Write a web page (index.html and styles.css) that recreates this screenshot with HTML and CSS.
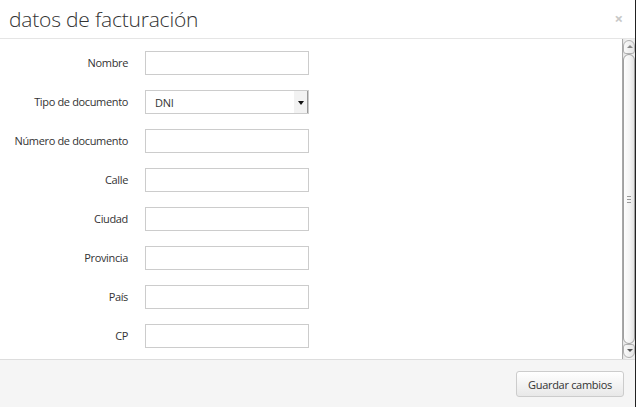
FILE: index.html
```
<!DOCTYPE html>
<html lang="es">
    <head>
        <meta charset="UTF-8">
        <title>datos de facturación</title>
        <link rel="stylesheet" href="styles.css">
    </head>
    <body>
        <div class="modal">

            <div class="modal-header">
                <h3>datos de facturación</h3>
                <span class="close">×</span>
            </div>

            <div class="modal-body">
                <form class="form-area">
                    <label for="nombre">Nombre</label>
                    <input type="text" id="nombre">

                    <label for="tipo">Tipo de documento</label>
                    <div class="select-box" id="tipo">
                        <span>DNI</span>
                        <span class="select-arrow"></span>
                    </div>

                    <label for="numero">Número de documento</label>
                    <input type="text" id="numero">

                    <label for="calle">Calle</label>
                    <input type="text" id="calle">

                    <label for="ciudad">Ciudad</label>
                    <input type="text" id="ciudad">

                    <label for="provincia">Provincia</label>
                    <input type="text" id="provincia">

                    <label for="pais">País</label>
                    <input type="text" id="pais">

                    <label for="cp">CP</label>
                    <input type="text" id="cp">
                </form>

                <!-- barra de desplazamiento -->
                <div class="scrollbar">
                    <div class="sb-btn sb-up"></div>
                    <div class="sb-thumb"><span class="grip"></span></div>
                    <div class="sb-btn sb-down"></div>
                </div>
            </div>

            <div class="modal-footer">
                <button type="button">Guardar cambios</button>
            </div>

        </div>
    </body>
</html>
```

FILE: styles.css
```
body {
    margin: 0;
    font-family: "Open Sans", Arial, sans-serif;
    color: #333;
    background: #fff;
}
.modal {
    width: 635px;
    height: 407px;
    border-right: 1px solid #222;
    display: flex;
    flex-direction: column;
}
.modal-header {
    height: 38px;
    border-bottom: 1px solid #e5e5e5;
    display: flex;
    align-items: center;
    justify-content: space-between;
    padding: 0 12px 0 9px;
}
.modal-header h3 {
    margin: 0;
    font-size: 21px;
    font-weight: 300;
    letter-spacing: -0.2px;
    color: #333;
    line-height: 38px;
}
.close {
    color: #c8c8c8;
    font-size: 15px;
    font-weight: bold;
    margin-top: -3px;
}
.modal-body {
    flex: 1;
    display: flex;
    min-height: 0;
}
.form-area {
    flex: 1;
    display: grid;
    grid-template-columns: 128px 164px;
    grid-auto-rows: 24px;
    column-gap: 17px;
    row-gap: 15px;
    align-items: center;
    padding-top: 12px;
    margin: 0;
    overflow: hidden;
}
.form-area label {
    text-align: right;
    font-size: 11px;
    letter-spacing: -0.35px;
    white-space: nowrap;
    color: #333;
    margin-top: -2px;
}
.form-area input {
    box-sizing: border-box;
    width: 164px;
    height: 24px;
    border: 1px solid #ccc;
    margin: 0;
    padding: 3px 6px;
}
.select-box {
    box-sizing: border-box;
    width: 164px;
    height: 24px;
    border: 1px solid #ccc;
    display: flex;
    align-items: center;
    justify-content: space-between;
    font-size: 11px;
    letter-spacing: -0.3px;
    padding-left: 9px;
}
.select-arrow {
    width: 13px;
    height: 22px;
    background: #f2f2f2;
    border-right: 1px solid #999;
    position: relative;
}
.select-arrow::after {
    content: "";
    position: absolute;
    left: 4px;
    top: 10px;
    border-left: 3px solid transparent;
    border-right: 3px solid transparent;
    border-top: 4px solid #111;
}
.scrollbar {
    width: 12px;
    border-left: 1px solid #a8a8a8;
    background: linear-gradient(to right, #e4e4e4, #f6f6f6 40%, #eaeaea);
    display: flex;
    flex-direction: column;
    padding: 1px 0;
}
.sb-btn {
    height: 12px;
    border: 1px solid #b0b0b0;
    border-radius: 6px 6px 3px 3px;
    background: linear-gradient(to right, #fafafa, #e6e6e6);
    position: relative;
}
.sb-down {
    border-radius: 3px 3px 6px 6px;
}
.sb-up::after, .sb-down::after {
    content: "";
    position: absolute;
    left: 3px;
    border-left: 3px solid transparent;
    border-right: 3px solid transparent;
}
.sb-up::after {
    top: 4px;
    border-bottom: 3px solid #888;
}
.sb-down::after {
    top: 4px;
    border-top: 3px solid #555;
}
.sb-thumb {
    flex: 1;
    border: 1px solid #a0a0a0;
    border-radius: 6px;
    background: linear-gradient(to right, #fdfdfd, #f3f3f3 60%, #e2e2e2);
    display: flex;
    align-items: center;
    justify-content: center;
}
.grip {
    width: 4px;
    height: 5px;
    border-top: 1px solid #999;
    border-bottom: 1px solid #999;
    position: relative;
}
.grip::after {
    content: "";
    position: absolute;
    left: 0;
    right: 0;
    top: 2px;
    border-top: 1px solid #999;
}
.modal-footer {
    height: 47px;
    border-top: 1px solid #ddd;
    background: #f5f5f5;
    display: flex;
    align-items: center;
    justify-content: flex-end;
    padding-right: 11px;
}
button {
    font-family: "Open Sans", Arial, sans-serif;
    font-size: 11px;
    letter-spacing: -0.3px;
    color: #333;
    width: 108px;
    height: 26px;
    border: 1px solid #ccc;
    border-radius: 3px;
    background: linear-gradient(#fff, #e8e8e8);
    padding: 0;
    margin-top: 1px;
}
```
